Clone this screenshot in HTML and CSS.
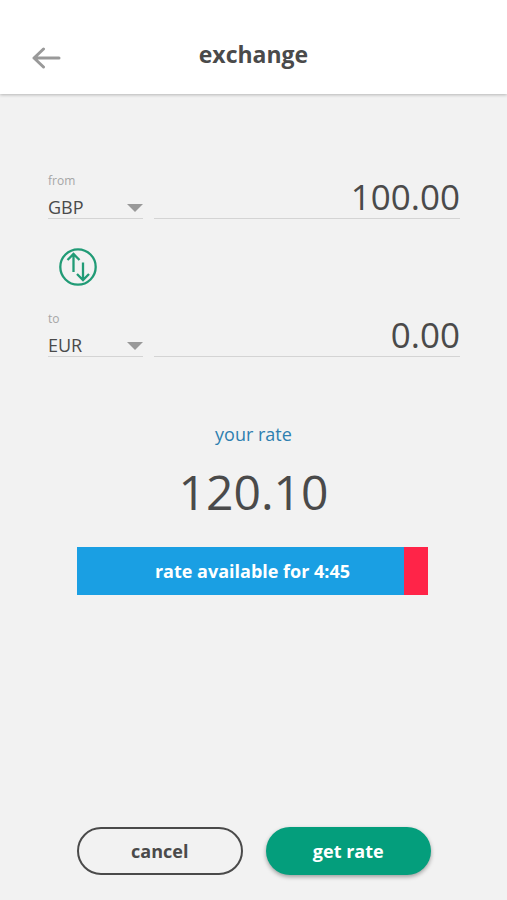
FILE: index.html
```html
<!DOCTYPE html>
<html lang="en">
<head>
  <meta charset="utf-8">
  <meta name="viewport" content="width=device-width, initial-scale=1">
  <title>exchange</title>
  <link rel="stylesheet" href="styles.css">
</head>
<body>
  <header class="header">
    <button class="back" type="button" aria-label="back">
      <svg width="30" height="24" viewBox="0 0 30 24" fill="none" stroke="currentColor" stroke-width="3" stroke-linecap="round" stroke-linejoin="round"><path d="M27 12H2M11.500 3L2 12L11.500 21"/></svg>
    </button>
    <h1 class="title">exchange</h1>
  </header>
  <form class="exchange">
    <div class="field">
      <label class="caption" for="from">from</label>
      <div class="picker">
        <select class="currency" id="from"><option>GBP</option><option>EUR</option></select>
      </div>
      <input class="amount" type="text" inputmode="decimal" aria-label="amount from" value="100.00">
    </div>
    <button class="swap" type="button" aria-label="swap currencies">
      <svg width="38" height="38" viewBox="0 0 38 38" fill="none" stroke="currentColor" stroke-width="2.300"><circle cx="19" cy="19" r="17.700"/><path d="M14.500 24V6.500M8.500 12L14.500 6L20.500 12M24 14.500V31.500M18 26L24 32L30 26"/></svg>
    </button>
    <div class="field">
      <label class="caption" for="to">to</label>
      <div class="picker">
        <select class="currency" id="to"><option>EUR</option><option>GBP</option></select>
      </div>
      <input class="amount" type="text" inputmode="decimal" aria-label="amount to" value="0.00">
    </div>
    <section class="rate">
      <h2 class="rate-label">your rate</h2>
      <p class="rate-value">120.10</p>
      <div class="timer">
        <div class="timer-left" style="width: 93.2%"></div>
        <span class="timer-text">rate available for 4:45</span>
      </div>
    </section>
    <div class="actions">
      <button class="button cancel" type="button">cancel</button>
      <button class="button confirm" type="submit">get rate</button>
    </div>
  </form>
</body>
</html>
```
FILE: styles.css
```css
* {
  box-sizing: border-box;
}

body {
  margin: 0;
  min-height: 100vh;
  display: flex;
  flex-direction: column;
  background: #f2f2f2;
  color: #4a4a4a;
  font-family: "Open Sans", sans-serif;
  font-size: 18px;
}

button,
input,
select {
  margin: 0;
  padding: 0;
  border: 0;
  border-radius: 0;
  background: none;
  color: inherit;
  font: inherit;
}

.header {
  display: grid;
  grid-template-columns: 30px 1fr 30px;
  align-items: center;
  padding: 38px 32px 16px;
  background: #fff;
  box-shadow: 0 1px 3px rgba(0, 0, 0, 0.25);
}

.back {
  display: flex;
  color: #999;
}

.title {
  margin: 0;
  padding-bottom: 8px;
  font-size: 23px;
  line-height: 32px;
  font-weight: 700;
  text-align: center;
}

.exchange {
  flex: 1;
  display: flex;
  flex-direction: column;
  padding: 79px 0 25px;
}

.field {
  display: grid;
  grid-template-columns: 95px 1fr;
  grid-template-rows: 16px 30px;
  column-gap: 11px;
  margin: 0 47px 0 48px;
}

.caption {
  font-size: 12px;
  line-height: 16px;
  color: #a6a6a6;
}

.picker {
  position: relative;
  grid-row: 2;
  border-bottom: 1px solid #d4d4d4;
}

.picker::after {
  content: "";
  position: absolute;
  right: 0;
  top: 15px;
  border: 8px solid transparent;
  border-top-color: #999;
  border-bottom-width: 0;
  pointer-events: none;
}

.currency {
  display: block;
  width: 100%;
  height: 29px;
  padding-top: 8px;
  line-height: 21px;
  appearance: none;
}

.amount {
  grid-column: 2;
  grid-row: 1 / 3;
  align-self: end;
  width: 100%;
  height: 44px;
  border-bottom: 1px solid #d4d4d4;
  font-size: 35px;
  text-align: right;
}

.swap {
  display: flex;
  align-self: flex-start;
  margin: 29px 0 25px 59px;
  border-radius: 50%;
  color: #219b76;
}

.rate {
  margin-top: 65px;
  text-align: center;
}

.rate-label {
  margin: 0;
  font-size: 18px;
  line-height: 24px;
  font-weight: 400;
  color: #2e7fb0;
}

.rate-value {
  margin: 14px 0 23px;
  font-size: 48px;
  line-height: 64px;
}

.timer {
  display: grid;
  align-items: center;
  height: 48px;
  margin: 0 79px 0 77px;
  background: #ff2448;
}

.timer-left,
.timer-text {
  grid-area: 1 / 1;
}

.timer-left {
  height: 100%;
  background: #1a9fe3;
}

.timer-text {
  color: #fff;
  font-weight: 700;
}

.actions {
  display: grid;
  grid-template-columns: 1fr 1fr;
  gap: 23px;
  margin: auto 76px 0 77px;
}

.button {
  height: 48px;
  border-radius: 24px;
  font-weight: 700;
}

.cancel {
  border: 2px solid #4a4a4a;
}

.confirm {
  background: #049e7c;
  color: #fff;
  box-shadow: 0 2px 4px rgba(0, 0, 0, 0.35);
}
```
